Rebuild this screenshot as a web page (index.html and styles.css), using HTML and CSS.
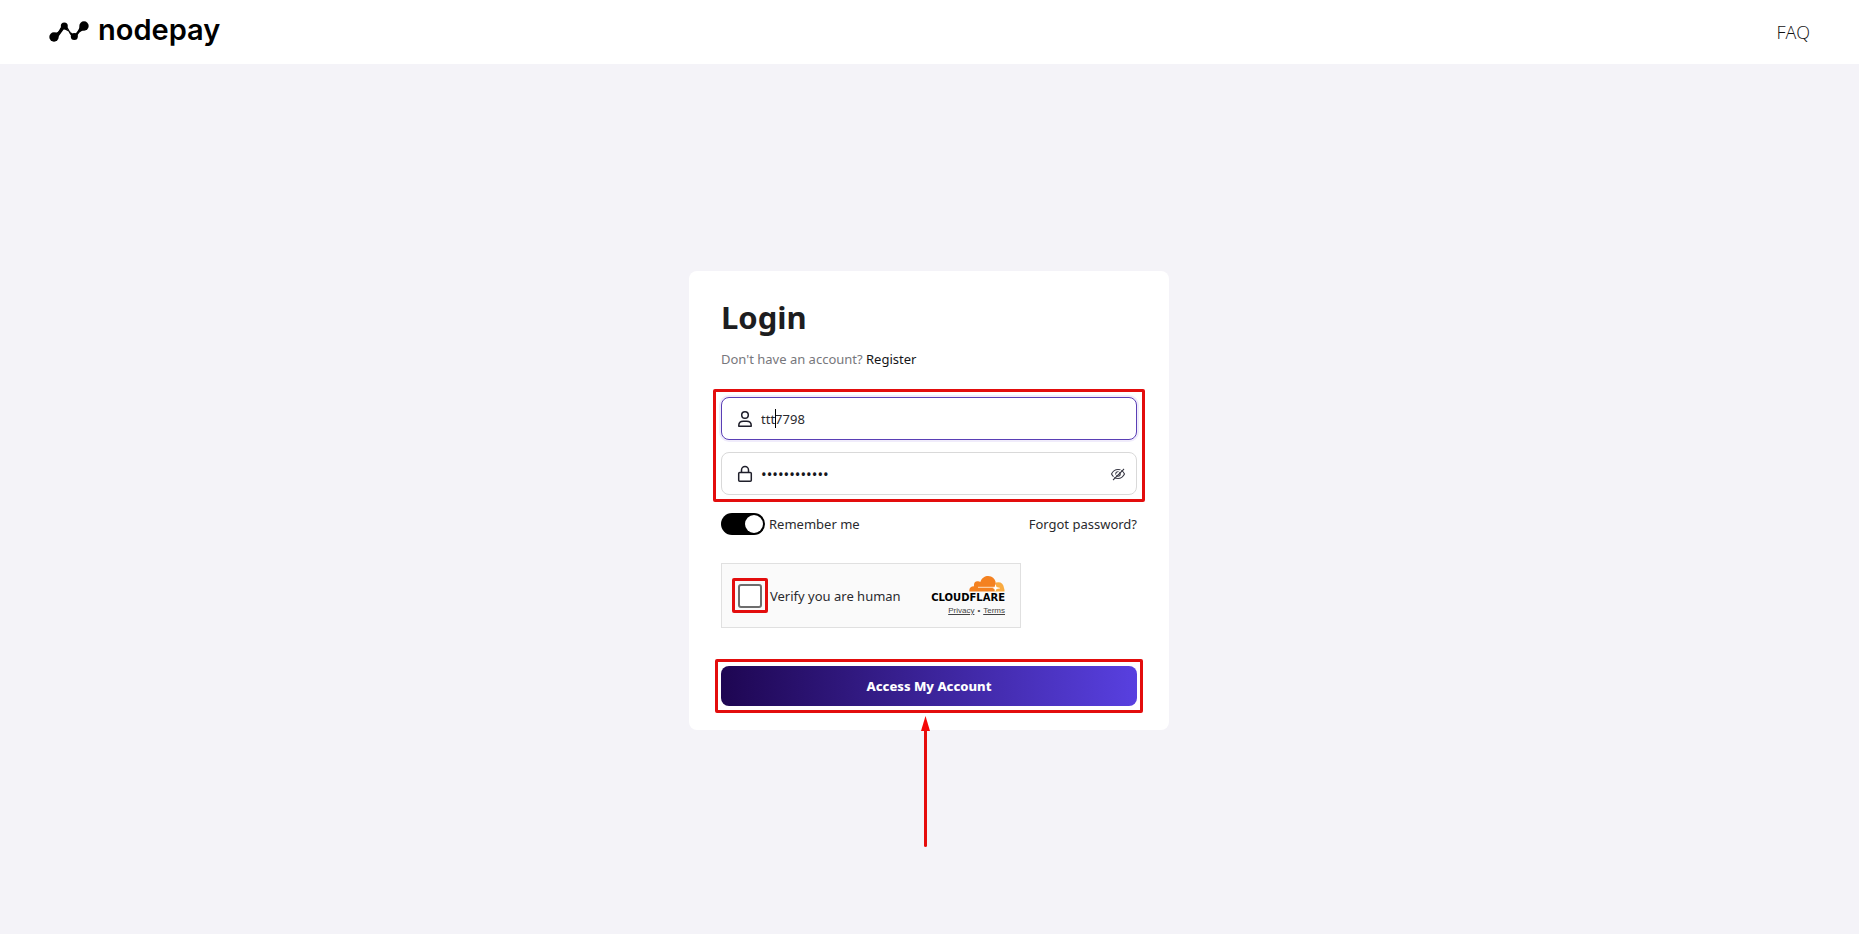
FILE: index.html
```html
<!DOCTYPE html>
<html lang="en">
<head>
<meta charset="utf-8">
<title>Nodepay – Login</title>
<link rel="stylesheet" href="styles.css">
</head>
<body>
<header class="topbar">
  <a class="brand" href="#">
    <svg class="brand-mark" width="40" height="22" viewBox="0 0 40 22" aria-hidden="true">
      <path d="M5 16 C11 13 11 5 15 5 C20 5 20 15 25 16 C30 14 29 7 35 5" fill="none" stroke="#000" stroke-width="1.300"/>
      <path d="M6 12 Q11 11 12.500 6 L18 6 Q18 8 19.500 10.500 L15 8 Q12 12 8.500 17Z M22.500 15 Q22 12 20.500 10 L25 14 Q29 11 31 5 L35 9 Q29 11 28 16Z"/>
      <circle cx="5" cy="16" r="4.700"/><circle cx="15.300" cy="5" r="3.500"/><circle cx="25.300" cy="15.500" r="3.500"/><circle cx="35" cy="5" r="4.700"/>
    </svg>
    <span class="brand-name">nodepay</span>
  </a>
  <nav><a class="nav-link" href="#">FAQ</a></nav>
</header>
<main class="page">
  <form class="card">
    <h1 class="title">Login</h1>
    <p class="subtitle">Don't have an account? <a href="#">Register</a></p>
    <div class="fields">
      <div class="field field-active">
        <svg width="20" height="20" viewBox="0 0 20 20" fill="none" stroke="#1f1f2b" stroke-width="1.500" aria-hidden="true"><circle cx="10" cy="6" r="3.300"/><path d="M3.800 17.200v-.900c0-2.600 2-4.100 4.500-4.100h3.400c2.500 0 4.500 1.500 4.500 4.100v.900z" stroke-linejoin="round"/></svg>
        <div class="entry">
          <input type="text" aria-label="Username" value="ttt7798">
          <span class="caret"></span>
        </div>
      </div>
      <div class="field">
        <svg width="20" height="20" viewBox="0 0 20 20" fill="none" stroke="#1f1f2b" stroke-width="1.500" stroke-linejoin="round" aria-hidden="true"><rect x="3.700" y="8.500" width="12.600" height="8.700" rx="1"/><path d="M6.500 8.500V6a3.500 3.500 0 0 1 7 0v2.500"/></svg>
        <div class="entry">
          <input class="secret" type="password" aria-label="Password" value="abcdefghijkl">
        </div>
        <button class="reveal" type="button" aria-label="Show password">
          <svg width="16" height="16" viewBox="0 0 16 16" fill="none" stroke="#3a3a46" stroke-width="1.100" aria-hidden="true"><path d="M1.500 8C3 5 5.300 3.500 8 3.500S13 5 14.500 8C13 11 10.700 12.500 8 12.500S3 11 1.500 8z"/><circle cx="8" cy="8" r="2.200"/><path d="M3 14L14 3"/><path d="M1.800 13.200L12.800 2.200" stroke="#fff"/></svg>
        </button>
      </div>
      <span class="mark mark-fields"></span>
    </div>
    <div class="options">
      <label class="remember"><input class="switch" type="checkbox" role="switch" checked>Remember me</label>
      <a href="#">Forgot password?</a>
    </div>
    <div class="captcha">
      <div class="check">
        <input type="checkbox" id="human">
        <span class="mark mark-check"></span>
      </div>
      <label for="human">Verify you are human</label>
      <div class="provider">
        <svg width="36" height="17" viewBox="0 0 36 17" aria-hidden="true">
          <path fill="#f9ab41" d="M25 16.500L27 7.500q7-1.500 8 5.500.700 1.500.500 3.500z"/>
          <path fill="#f48120" d="M.3 16.500Q-.2 11.500 5 11.300 4.500 6 9 6.300q1.300 0 2.300.800C13 1 19 0 22 1.500c4 2 5.500 5.500 4.500 9.500l-1.500 5.500z"/>
          <path d="M9 12.300H25M25.500 13.200H31" stroke="#fde0c2" stroke-width="1"/><path fill="#fff" d="M26.500 9l1 3 3 1-3 1-1 2.500-1-2.500-2-1 2-1z"/>
        </svg>
        <span class="provider-name">CLOUDFLARE</span>
        <span class="legal"><a href="#">Privacy</a><span>•</span><a href="#">Terms</a></span>
      </div>
    </div>
    <div class="action">
      <button class="submit" type="submit">Access My Account</button>
      <span class="mark mark-action"></span>
      <svg class="arrow" width="9" height="131" viewBox="0 0 9 131" aria-hidden="true"><path d="M4.500 10V129.500" stroke="#e60c0c" stroke-width="3" stroke-linecap="round"/><path d="M4.500 0L9 15H0z" fill="#f50808"/></svg>
    </div>
  </form>
</main>
</body>
</html>
```
FILE: styles.css
```css
* { box-sizing: border-box; }
body {
  margin: 0;
  min-height: 100vh;
  display: flex;
  flex-direction: column;
  background: #f4f3f8;
  color: #2a2a2e;
  font: 13px/20px "Noto Sans", "Open Sans", sans-serif;
}
a { color: inherit; text-decoration: none; }
button, input { font: inherit; color: inherit; }

.topbar {
  height: 64px;
  padding: 0 49px;
  display: flex;
  align-items: center;
  justify-content: space-between;
  background: #fff;
}
.brand { display: flex; align-items: center; gap: 9px; color: #000; }
.brand-name { font: 600 29px/40px Inter, sans-serif; padding-bottom: 4px; }
.nav-link { font: 300 18px/24px "Open Sans", "Noto Sans", sans-serif; color: #111; }

.page { flex: 1; display: grid; place-items: center; padding: 3px 17px 0 16px; }
.card {
  width: 100%;
  max-width: 480px;
  padding: 24px 32px;
  border-radius: 8px;
  background: #fff;
}
.title { margin: 0 0 10px; font-size: 31px; line-height: 44px; color: #1d1d20; }
.subtitle { margin: 0 0 28px; color: #77777c; }
.subtitle a { color: #151518; }

.fields { position: relative; display: grid; gap: 12px; }
.field {
  height: 43px;
  padding: 0 10px 0 13px;
  display: flex;
  align-items: center;
  gap: 6px;
  border: 1px solid #d9d9d9;
  border-radius: 8px;
  background: #fff;
}
.field-active { border-color: #5a3fb5; box-shadow: 0 0 0 2px #f0ecfb; }
.entry { position: relative; flex: 1; display: flex; }
.entry input { width: 100%; padding: 0; border: 0; outline: 0; background: none; }
.entry .secret { font-size: 15px; color: #16161c; }
.caret { position: absolute; left: 14px; top: 0; width: 1px; height: 19px; background: #000; }
.reveal { display: flex; padding: 0; border: 0; background: none; }

.mark { position: absolute; border: 3px solid #e30d0d; border-radius: 2px; pointer-events: none; }
.mark-fields { inset: -8px -8px -7px; }
.mark-check { inset: -6px -6px -5px; }
.mark-action { inset: -7px -6px; }

.options { margin-top: 18px; display: flex; align-items: center; justify-content: space-between; }
.remember { display: flex; align-items: center; gap: 4px; }
.switch {
  appearance: none;
  width: 44px;
  height: 22px;
  margin: 0;
  padding: 2px;
  border-radius: 11px;
  background: #000;
  display: flex;
  justify-content: flex-end;
}
.switch::before { content: ""; width: 18px; height: 18px; border-radius: 50%; background: #fff; }

.captcha {
  width: 300px;
  max-width: 100%;
  height: 65px;
  margin-top: 28px;
  padding: 0 15px 0 16px;
  display: flex;
  align-items: center;
  gap: 8px;
  border: 1px solid #e0e0e0;
  background: #fafafa;
}
.check { position: relative; display: flex; }
.check input {
  appearance: none;
  width: 24px;
  height: 24px;
  margin: 0;
  border: 2px solid #6d6d6d;
  border-radius: 3px;
  background: #fff;
}
.provider { margin-left: auto; display: flex; flex-direction: column; align-items: flex-end; color: #000; }
.provider-name { font: 700 10px/11px "DejaVu Sans", sans-serif; }
.legal { padding-top: 3px; display: flex; gap: 3px; font: 8px/10px "Liberation Sans", sans-serif; color: #444; }
.legal a { text-decoration: underline; }

.action { position: relative; margin-top: 38px; }
.submit {
  display: block;
  width: 100%;
  height: 40px;
  padding: 0;
  border: 0;
  border-radius: 8px;
  background: linear-gradient(90deg, #1e0652, #5840e0);
  color: #fff;
  font-weight: 800;
}
.arrow { position: absolute; top: 50px; left: 200px; }
```
